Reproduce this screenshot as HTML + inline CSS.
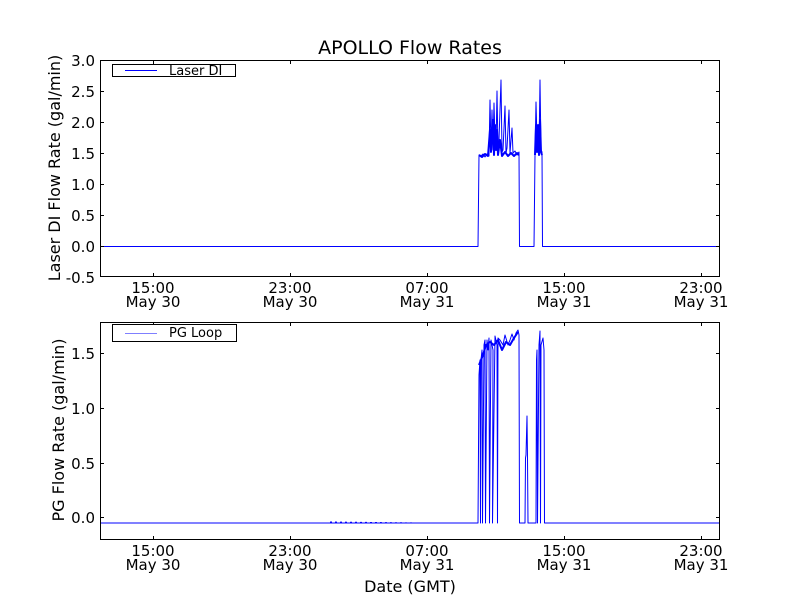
<!DOCTYPE html>
<html><head><style>
html,body{margin:0;padding:0;background:#fff;}
svg text{font-family:"DejaVu Sans","Liberation Sans",sans-serif;fill:#000;}
</style></head><body>
<svg width="800" height="600" viewBox="0 0 800 600" xmlns="http://www.w3.org/2000/svg">
<rect width="800" height="600" fill="#fff"/>
<text x="410" y="54" font-size="19" text-anchor="middle">APOLLO Flow Rates</text>

<!-- top axes -->
<g fill="none" stroke-linejoin="round">
<polyline stroke="#00f" stroke-width="1" points="100,246.5 478,246.5 479,155 481,156 483,154 485,157 487,154 489,156 490,100 491,150 492,110 493,150 494,103 495,140 496,150 497,91 498,150 499,140 501,80 502,152 503,150 505,106 506,153 507,148 509,110 510,153 512,128 513,153 515,151 517,155 519,152 519.5,246.5 534,246.5 535,155 536,102 537,140 538,125 539,152 540,80 541,150 542,152 542.5,246.5 720,246.5"/>
<polyline stroke="#00f" stroke-width="2" points="479,155 482,157 485,154 488,156 490,130 491,152 493,120 494,155 495,125 496,150 497,130 498,155 500,140 502,156 505,152 508,156 511,153 514,156 517,153 519,155"/>
<polyline stroke="#00f" stroke-width="2" points="535,155 536,125 537,152 538,125 539,155 540,120 541,152 542,155"/>
</g>
<rect x="100.5" y="60.5" width="619" height="216" fill="none" stroke="#000" stroke-width="1"/>
<g stroke="#000" stroke-width="1">
<line x1="153.5" y1="60" x2="153.5" y2="64"/><line x1="153.5" y1="277" x2="153.5" y2="273"/>
<line x1="290.5" y1="60" x2="290.5" y2="64"/><line x1="290.5" y1="277" x2="290.5" y2="273"/>
<line x1="427.5" y1="60" x2="427.5" y2="64"/><line x1="427.5" y1="277" x2="427.5" y2="273"/>
<line x1="564.5" y1="60" x2="564.5" y2="64"/><line x1="564.5" y1="277" x2="564.5" y2="273"/>
<line x1="701.5" y1="60" x2="701.5" y2="64"/><line x1="701.5" y1="277" x2="701.5" y2="273"/>
<line x1="100" y1="91.5" x2="104" y2="91.5"/><line x1="720" y1="91.5" x2="716" y2="91.5"/>
<line x1="100" y1="122.5" x2="104" y2="122.5"/><line x1="720" y1="122.5" x2="716" y2="122.5"/>
<line x1="100" y1="153.5" x2="104" y2="153.5"/><line x1="720" y1="153.5" x2="716" y2="153.5"/>
<line x1="100" y1="184.5" x2="104" y2="184.5"/><line x1="720" y1="184.5" x2="716" y2="184.5"/>
<line x1="100" y1="215.5" x2="104" y2="215.5"/><line x1="720" y1="215.5" x2="716" y2="215.5"/>
<line x1="100" y1="246.5" x2="104" y2="246.5"/><line x1="720" y1="246.5" x2="716" y2="246.5"/>
</g>
<g font-size="15" text-anchor="end">
<text x="95" y="66">3.0</text><text x="95" y="97">2.5</text><text x="95" y="128">2.0</text>
<text x="95" y="159">1.5</text><text x="95" y="190">1.0</text><text x="95" y="221">0.5</text>
<text x="95" y="252">0.0</text><text x="95" y="283">-0.5</text>
</g>
<g font-size="15" text-anchor="middle">
<text x="153" y="293">15:00</text><text x="153" y="307">May 30</text>
<text x="290" y="293">23:00</text><text x="290" y="307">May 30</text>
<text x="427" y="293">07:00</text><text x="427" y="307">May 31</text>
<text x="564" y="293">15:00</text><text x="564" y="307">May 31</text>
<text x="701" y="293">23:00</text><text x="701" y="307">May 31</text>
</g>
<text transform="translate(60,168) rotate(-90)" font-size="16" text-anchor="middle">Laser DI Flow Rate (gal/min)</text>
<rect x="112.5" y="64.5" width="123" height="12" fill="#fff" stroke="#000"/>
<line x1="125" y1="70.5" x2="157" y2="70.5" stroke="#00f"/>
<text x="169" y="75" font-size="13">Laser DI</text>

<!-- bottom axes -->
<g fill="none" stroke-linejoin="round">
<polyline stroke="#00f" stroke-width="1" points="100,523 478,523 479,375 480,360 480.5,523 481,360 482,350 482.5,523 484,345 485,340 485.5,523 487,340 488,350 489,338 489.5,523 491,340 493,350 492.5,523 495,336 497,345 497.5,523 498,338 500,340 503,345 505,335 508,345 510,340 512,334 514,340 516,333 518,330 519,335 519.5,523 525,523 525.5,458 526,455 527,416 527.5,458 528,523 536,523 536.5,360 537,350 537.5,523 539,345 540,331 540.5,523 541,345 543,338 544,350 544.5,523 720,523"/>
<polyline stroke="#00f" stroke-width="2" points="479,365 483,355 486,345 490,342 494,345 498,340 502,350 506,342 510,345 514,338 518,332"/>
<polyline stroke="#00f" stroke-width="1" points="330,522 420,523" stroke-dasharray="2,3"/>
</g>
<rect x="100.5" y="322.5" width="619" height="217" fill="none" stroke="#000" stroke-width="1"/>
<g stroke="#000" stroke-width="1">
<line x1="153.5" y1="322" x2="153.5" y2="326"/><line x1="153.5" y1="540" x2="153.5" y2="536"/>
<line x1="290.5" y1="322" x2="290.5" y2="326"/><line x1="290.5" y1="540" x2="290.5" y2="536"/>
<line x1="427.5" y1="322" x2="427.5" y2="326"/><line x1="427.5" y1="540" x2="427.5" y2="536"/>
<line x1="564.5" y1="322" x2="564.5" y2="326"/><line x1="564.5" y1="540" x2="564.5" y2="536"/>
<line x1="701.5" y1="322" x2="701.5" y2="326"/><line x1="701.5" y1="540" x2="701.5" y2="536"/>
<line x1="100" y1="353.5" x2="104" y2="353.5"/><line x1="720" y1="353.5" x2="716" y2="353.5"/>
<line x1="100" y1="408.5" x2="104" y2="408.5"/><line x1="720" y1="408.5" x2="716" y2="408.5"/>
<line x1="100" y1="463.5" x2="104" y2="463.5"/><line x1="720" y1="463.5" x2="716" y2="463.5"/>
<line x1="100" y1="517.5" x2="104" y2="517.5"/><line x1="720" y1="517.5" x2="716" y2="517.5"/>
</g>
<g font-size="15" text-anchor="end">
<text x="95" y="359">1.5</text><text x="95" y="414">1.0</text>
<text x="95" y="469">0.5</text><text x="95" y="523">0.0</text>
</g>
<g font-size="15" text-anchor="middle">
<text x="153" y="556">15:00</text><text x="153" y="570">May 30</text>
<text x="290" y="556">23:00</text><text x="290" y="570">May 30</text>
<text x="427" y="556">07:00</text><text x="427" y="570">May 31</text>
<text x="564" y="556">15:00</text><text x="564" y="570">May 31</text>
<text x="701" y="556">23:00</text><text x="701" y="570">May 31</text>
</g>
<text x="410" y="592" font-size="16" text-anchor="middle">Date (GMT)</text>
<text transform="translate(64,430) rotate(-90)" font-size="16" text-anchor="middle">PG Flow Rate (gal/min)</text>
<rect x="112.5" y="324.5" width="124" height="17" fill="#fff" stroke="#000"/>
<line x1="125" y1="333.5" x2="157" y2="333.5" stroke="#00f" stroke-opacity="0.5"/>
<text x="169" y="337" font-size="13">PG Loop</text>
</svg>
</body></html>
